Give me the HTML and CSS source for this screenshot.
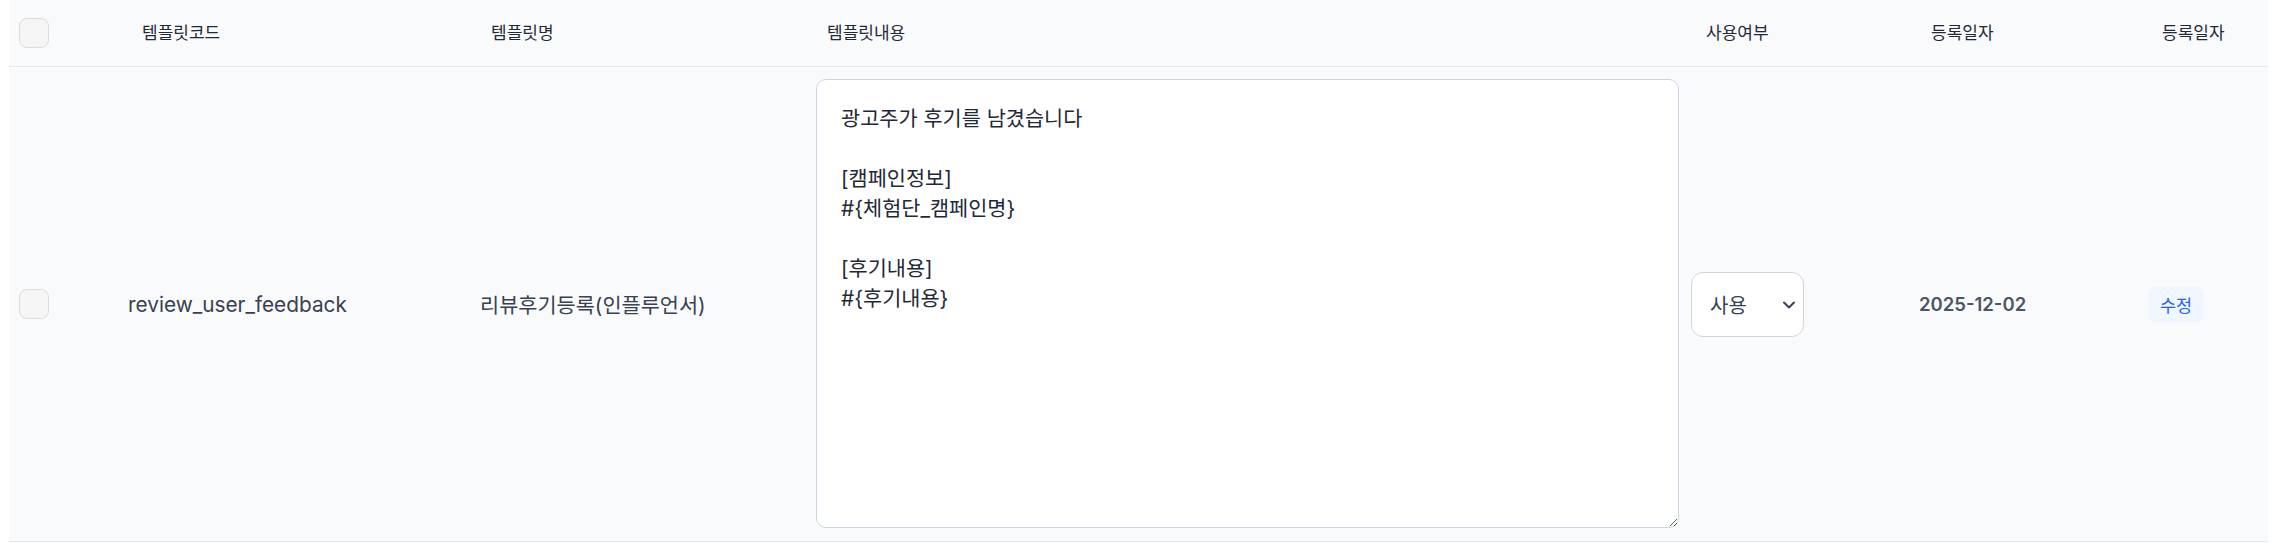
FILE: index.html
```html
<!DOCTYPE html>
<html lang="ko">
<head>
<meta charset="utf-8">
<title>템플릿 목록</title>
<link rel="stylesheet" href="styles.css">
</head>
<body>
<div class="page">
  <div class="table">
    <div class="row head">
      <div class="cell c-check"><span class="checkbox"></span></div>
      <div class="cell th th-code">템플릿코드</div>
      <div class="cell th th-name">템플릿명</div>
      <div class="cell th th-content">템플릿내용</div>
      <div class="cell th th-use">사용여부</div>
      <div class="cell th th-date">등록일자</div>
      <div class="cell th th-edit">등록일자</div>
    </div>
    <div class="row body">
      <div class="cell c-check"><span class="checkbox"></span></div>
      <div class="cell td code">review_user_feedback</div>
      <div class="cell td name">리뷰후기등록(인플루언서)</div>
      <div class="cell td content"><textarea class="textarea" readonly>광고주가 후기를 남겼습니다

[캠페인정보]
#{체험단_캠페인명}

[후기내용]
#{후기내용}</textarea></div>
      <div class="cell td use">
        <div class="select-wrap">
          <select class="select"><option>사용</option><option>미사용</option></select>
          <svg class="chev" width="14" height="10" viewBox="0 0 14 10"><path d="M2 2.5 L7 7.5 L12 2.5" fill="none" stroke="#374151" stroke-width="2" stroke-linecap="round" stroke-linejoin="round"/></svg>
        </div>
      </div>
      <div class="cell td date">2025-12-02</div>
      <div class="cell td edit"><button class="btn-edit">수정</button></div>
    </div>
  </div>
</div>
</body>
</html>
```
FILE: styles.css
```css
* { box-sizing: border-box; }
html, body { margin: 0; padding: 0; background: #ffffff; }
body { font-family: Inter, "Noto Sans CJK KR", sans-serif; color: #1f2937; }
.page { padding: 0 10px 0 9px; }
.table { width: 100%; }
.row {
  display: grid;
  grid-template-columns: 109px 352px 336px 875px 228px 230px 1fr;
  background: #f8fafc;
  border-bottom: 1px solid #e5e7eb;
}
.row.head { height: 67px; }
.row.body { height: 475px; }
.cell { display: flex; align-items: center; min-width: 0; }
.c-check { padding-left: 10px; }
.checkbox {
  display: block; width: 30px; height: 30px;
  background: #f5f5f5; border: 1px solid #dcdcdc; border-radius: 8px;
}
.th { font-family: "Noto Sans CJK KR", sans-serif; font-size: 17px; color: #1f2937; padding-left: 22px; padding-bottom: 4px; }
.th-code { padding-left: 24px; }
.th-name { padding-left: 21px; }
.th-content { padding-left: 21px; }
.th-use { padding-left: 25px; }
.th-date { padding-left: 22px; }
.th-edit { padding-left: 23px; }
.td { padding-left: 10px; }
.code { font-size: 20.8px; color: #374151; }
.name { font-size: 20.8px; color: #374151; }
.content { padding: 12px 2px 13px 10px; align-items: stretch; }
.textarea {
  width: 863px; height: 449px;
  border: 1px solid #cbd5e1; border-radius: 10px;
  background: #ffffff;
  padding: 24px 24px 20px;
  font-family: Inter, "Noto Sans CJK KR", sans-serif;
  font-size: 20.8px; line-height: 30px; color: #1f2937;
  resize: vertical; outline: none;
}
.select-wrap { position: relative; width: 113px; height: 65px; }
.select {
  appearance: none; -webkit-appearance: none;
  width: 100%; height: 100%;
  border: 1px solid #d1d5db; border-radius: 12px;
  background: #ffffff;
  padding: 0 0 0 18px;
  font-family: "Noto Sans CJK KR", sans-serif; font-size: 20px; color: #374151;
}
.chev { position: absolute; right: 8px; top: 28px; pointer-events: none; }
.date { font-size: 18.5px; font-weight: 600; color: #4b5563; }
.btn-edit {
  font-family: "Noto Sans CJK KR", sans-serif; font-size: 17.5px; color: #2563eb;
  background: #eff6ff; border: none; border-radius: 8px;
  padding: 5px 11px; line-height: 25px;
}
```
